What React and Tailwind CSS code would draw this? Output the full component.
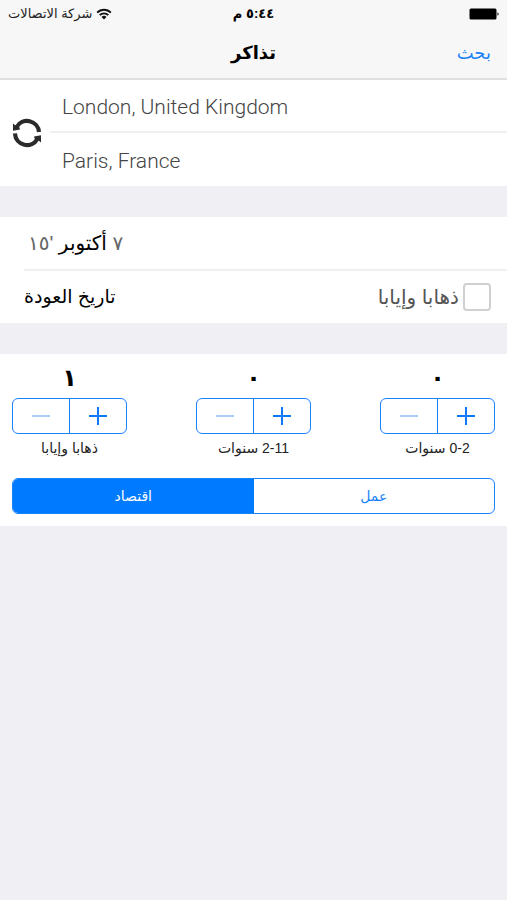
import React, { useState } from 'react'

function WifiIcon() {
  return (
    <svg viewBox="0 0 16 12" className="h-3 w-4" aria-hidden="true">
      <g fill="none" stroke="#111" strokeWidth="1.9">
        <path d="M1.2 4.6a9.6 9.6 0 0 1 13.6 0" />
        <path d="M3.7 7.2a6 6 0 0 1 8.6 0" />
      </g>
      <path d="M8 11.6 5.5 9a3.6 3.6 0 0 1 5 0z" fill="#111" />
    </svg>
  )
}

function BatteryIcon() {
  return (
    <svg viewBox="0 0 30 12" className="h-3 w-[30px]" aria-hidden="true">
      <rect x="0.5" y="0.5" width="27" height="11" rx="1.5" fill="#000" />
      <path d="M28.5 4.2a2 2 0 0 1 0 3.6z" fill="#000" />
    </svg>
  )
}

function SwapArrow() {
  return (
    <>
      <path d="M27 14A12 12 0 0 0 4.6 9" fill="none" stroke="#2b2b2b" strokeWidth="4.2" />
      <path d="M1 5.6 3.4 7.4 7 8.2 8 11.4 1 12.8z" fill="#2b2b2b" />
    </>
  )
}

function SwapIcon() {
  return (
    <svg viewBox="0 0 30 30" className="h-[30px] w-[30px]" aria-hidden="true">
      <SwapArrow />
      <g transform="rotate(180 15 15)">
        <SwapArrow />
        <path d="M27 14v0.6" stroke="#2b2b2b" strokeWidth="4.2" />
      </g>
    </svg>
  )
}

function StepIcon({ plus }) {
  return (
    <svg viewBox="0 0 20 20" className="h-5 w-5" aria-hidden="true">
      <path
        d={plus ? 'M1 10h18M10 1v18' : 'M1 10h18'}
        stroke="currentColor"
        strokeWidth={plus ? 2 : 1.6}
      />
    </svg>
  )
}

const arabicDigits = (value) => value.toLocaleString('ar-EG')

/**
 * Passenger counter: value above, stepper, caption below
 */
function Stepper({ label, value, min, onChange }) {
  return (
    <div role="group" aria-label={label} className="flex w-[115px] flex-col items-center">
      <output dir="rtl" className="h-8 text-2xl leading-8 font-bold text-black">
        {arabicDigits(value)}
      </output>
      <div className="mt-1 flex h-9 w-full overflow-hidden rounded-md border border-[#1a82f7]">
        <button
          type="button"
          aria-label="-"
          disabled={value <= min}
          onClick={() => onChange(value - 1)}
          className="flex flex-1 items-center justify-center border-r border-[#1a82f7] text-[#0a7bfb] disabled:text-[#8dbdf3]"
        >
          <StepIcon />
        </button>
        <button
          type="button"
          aria-label="+"
          onClick={() => onChange(value + 1)}
          className="flex flex-1 items-center justify-center text-[#0a7bfb]"
        >
          <StepIcon plus />
        </button>
      </div>
      <span dir="rtl" className="mt-1 text-sm text-[#222]">
        {label}
      </span>
    </div>
  )
}

const passengerTypes = [
  { id: 'adults', label: 'ذهابا وإيابا', min: 1 },
  { id: 'children', label: '2-11 سنوات', min: 0 },
  { id: 'infants', label: '0-2 سنوات', min: 0 },
]

const cabins = [
  { id: 'economy', label: 'اقتصاد' },
  { id: 'business', label: 'عمل' },
]

export default function App() {
  const [cities, setCities] = useState(['London, United Kingdom', 'Paris, France'])
  const [roundTrip, setRoundTrip] = useState(false)
  const [counts, setCounts] = useState({ adults: 1, children: 0, infants: 0 })
  const [cabin, setCabin] = useState('economy')

  return (
    <div className="min-h-screen bg-[#efeff4] font-['Liberation_Sans','DejaVu_Sans',sans-serif]">
      <header className="border-b-2 border-[#e0e0e1] bg-[#f7f7f7]">
        <div className="grid h-7 grid-cols-3 items-center px-2 text-[13px] text-[#222]">
          <div className="flex items-center gap-1">
            <span dir="rtl" className="whitespace-nowrap">شركة الاتصالات</span>
            <WifiIcon />
          </div>
          <span dir="rtl" className="text-center font-bold text-black">٥:٤٤ م</span>
          <div className="flex justify-end">
            <BatteryIcon />
          </div>
        </div>
        <div className="grid h-[50px] grid-cols-3 items-center px-4">
          <h1 dir="rtl" className="col-start-2 text-center text-lg font-bold text-black">
            تذاكر
          </h1>
          <button type="button" dir="rtl" className="justify-self-end text-lg text-[#1a82f7]">
            بحث
          </button>
        </div>
      </header>

      <main>
        <section className="flex items-center bg-white">
          <button
            type="button"
            aria-label="⇄"
            onClick={() => setCities([cities[1], cities[0]])}
            className="ml-3 shrink-0"
          >
            <SwapIcon />
          </button>
          <div className="ml-2 flex-1 divide-y-2 divide-[#f0f0f2]">
            {cities.map((city) => (
              <button
                key={city}
                type="button"
                className="block h-[53px] w-full pt-1 pl-3 text-left font-['Roboto','Liberation_Sans',sans-serif] text-[21px] font-light text-[#444]"
              >
                {city}
              </button>
            ))}
          </div>
        </section>

        <section className="mt-[31px] bg-white">
          <div className="ml-6 border-b-2 border-[#f0f0f2]">
            <button type="button" dir="rtl" className="block h-[52px] pl-1 text-xl text-[#666]">
              ٧ <span className="text-black">أكتوبر</span> &apos;١٥
            </button>
          </div>
          <div className="flex h-[52px] items-center justify-between pr-4 pl-6">
            <button type="button" dir="rtl" className="text-[19px] text-black">
              تاريخ العودة
            </button>
            <label dir="rtl" className="flex items-center gap-1 text-xl text-[#555]">
              <input
                type="checkbox"
                checked={roundTrip}
                onChange={(e) => setRoundTrip(e.target.checked)}
                className="h-7 w-7 appearance-none rounded-sm border-2 border-[#d0d0d0] bg-white checked:bg-[#007aff]"
              />
              ذهابا وإيابا
            </label>
          </div>
        </section>

        <section className="mt-[31px] bg-white px-3 pt-2 pb-3">
          <div className="flex justify-between">
            {passengerTypes.map(({ id, label, min }) => (
              <Stepper
                key={id}
                label={label}
                min={min}
                value={counts[id]}
                onChange={(value) => setCounts({ ...counts, [id]: value })}
              />
            ))}
          </div>
          <div className="mt-5 flex h-9 overflow-hidden rounded-md border border-[#1a82f7]">
            {cabins.map(({ id, label }) => (
              <button
                key={id}
                type="button"
                dir="rtl"
                aria-pressed={cabin === id}
                onClick={() => setCabin(id)}
                className="flex-1 text-sm text-[#1a82f7] aria-pressed:bg-[#007aff] aria-pressed:text-white"
              >
                {label}
              </button>
            ))}
          </div>
        </section>
      </main>
    </div>
  )
}
